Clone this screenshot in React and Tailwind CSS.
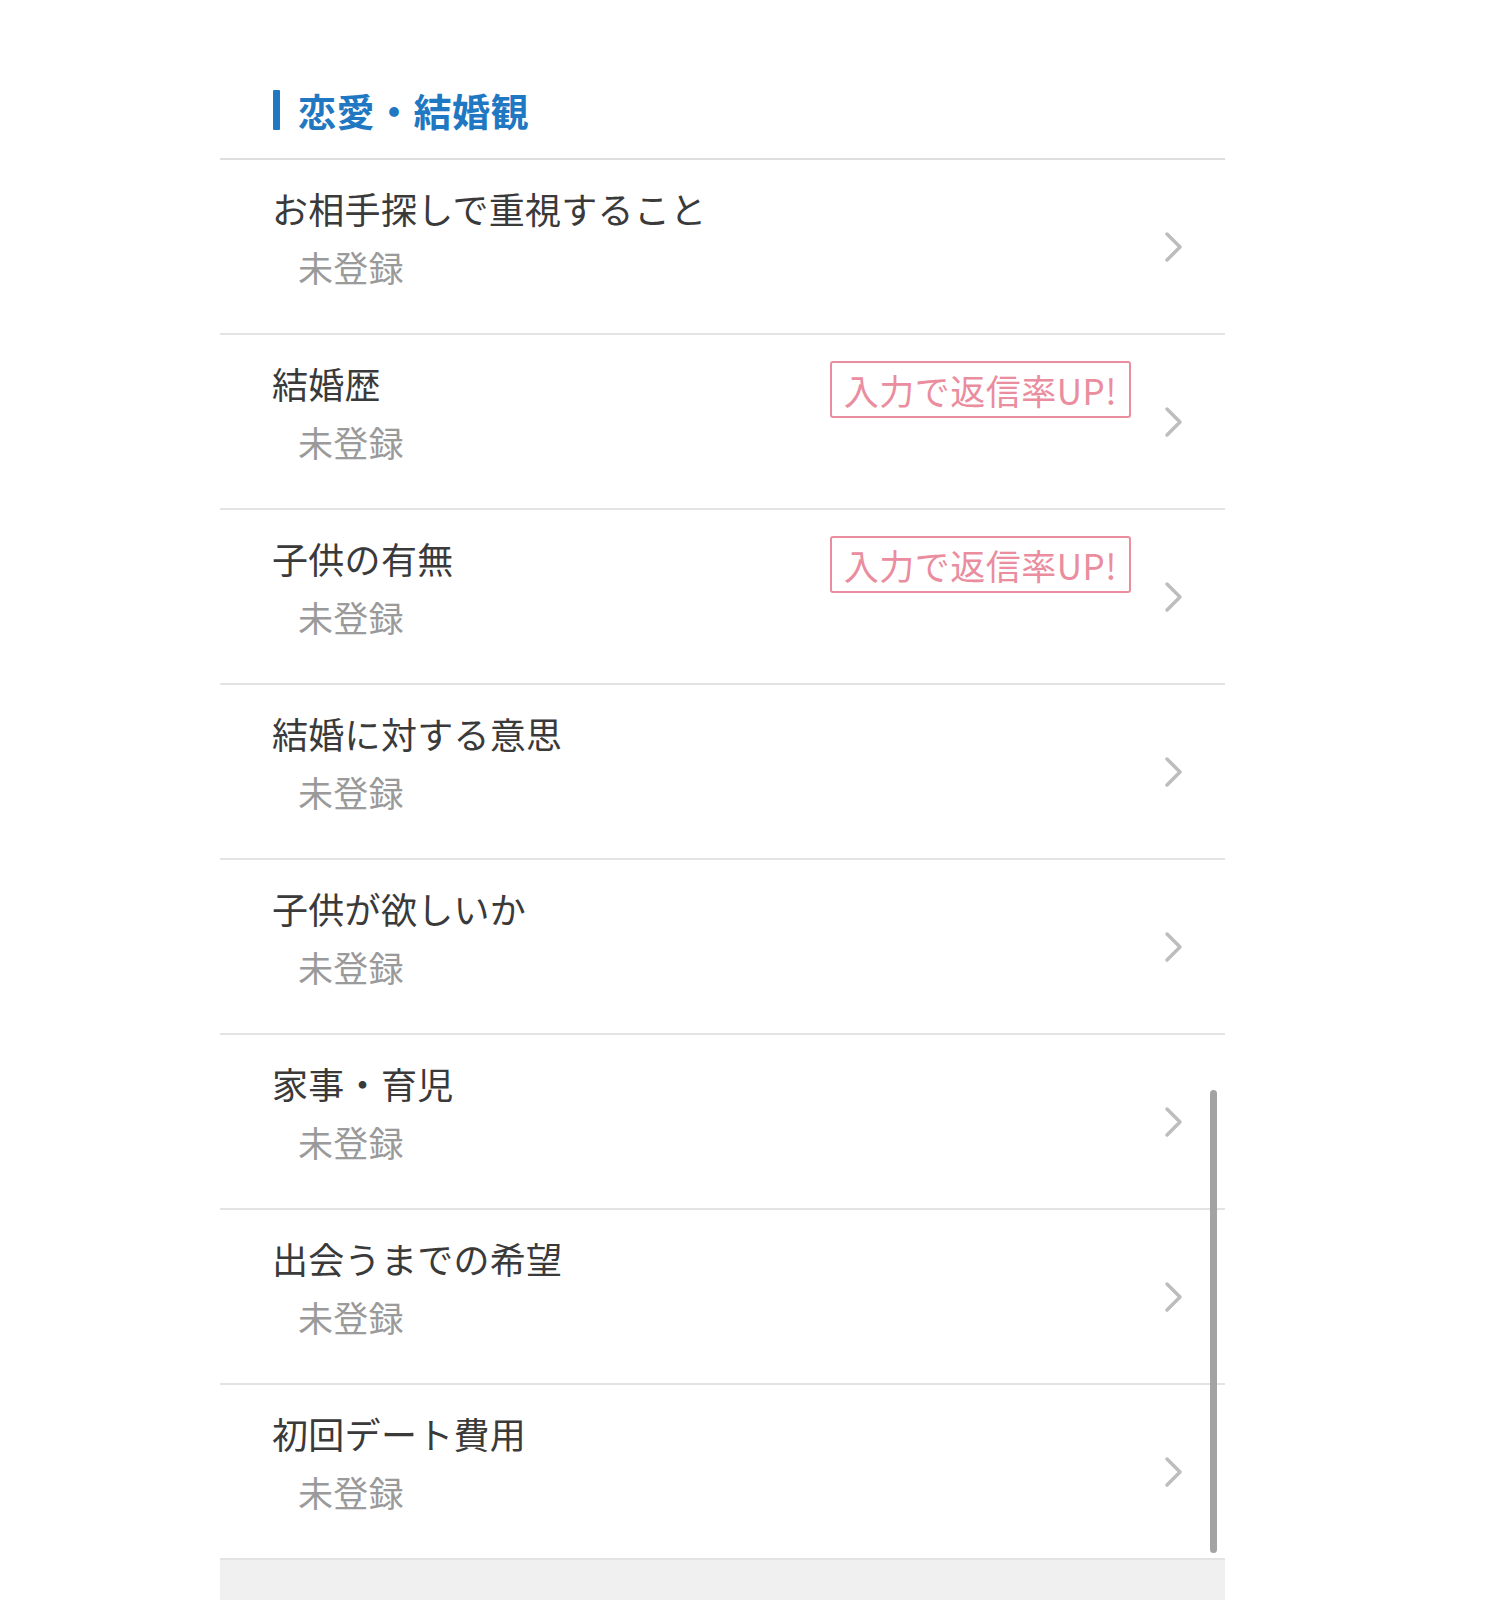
import React from 'react';

const items = [
  { label: 'お相手探しで重視すること' },
  { label: '結婚歴', badge: true },
  { label: '子供の有無', badge: true },
  { label: '結婚に対する意思' },
  { label: '子供が欲しいか' },
  { label: '家事・育児' },
  { label: '出会うまでの希望' },
  { label: '初回デート費用' },
];

const font = { fontFamily: '"Noto Sans CJK JP", "Noto Sans", sans-serif' };

function Chevron() {
  return (
    <svg width="22" height="32" viewBox="0 0 22 32" fill="none">
      <path d="M4 3 L17 16 L4 29" stroke="#bdbdbd" strokeWidth="3.5" strokeLinecap="round" strokeLinejoin="round" />
    </svg>
  );
}

export default function App() {
  return (
    <div className="w-[1500px] h-[1600px] bg-white overflow-hidden" style={font}>
      <div className="relative ml-[220px] w-[1005px]">
        <div className="h-[158px] flex items-end pl-[53px] pb-[28px]">
          <div className="flex items-center gap-[18px]">
            <span className="w-[7px] h-[40px] bg-[#1f78c1] rounded-[1px]" />
            <h2 className="text-[38px] leading-[40px] font-bold text-[#1f78c1] tracking-[0.5px]">恋愛・結婚観</h2>
          </div>
        </div>
        <div className="border-t-2 border-[#dedede]">
          {items.map((item) => (
            <div key={item.label} className="h-[175px] border-b-2 border-[#e3e3e3] flex items-center pl-[52px] pr-[40px]">
              <div className="flex-1 self-start pt-[27px]">
                <div className="h-[42px] flex items-start justify-between">
                  <p className="text-[36px] leading-[42px] text-[#3a3a3a] tracking-[0.3px]">{item.label}</p>
                  {item.badge && (
                    <span className="mt-[-1px] mr-[32px] h-[57px] px-[12px] flex items-center border-2 border-[#ea8d9e] rounded-[3px] text-[35px] text-[#ea8d9e] leading-none tracking-[0.5px]">
                      入力で返信率UP!
                    </span>
                  )}
                </div>
                <p className="mt-[17px] ml-[26px] text-[35px] leading-[42px] text-[#9a9a9a] tracking-[0.3px]">未登録</p>
              </div>
              <Chevron />
            </div>
          ))}
        </div>
        <div className="h-[60px] bg-[#f0f0f0]" />
        <div className="absolute left-[990px] top-[1090px] w-[7px] h-[463px] rounded-full bg-[#a3a3a3]" />
      </div>
    </div>
  );
}
